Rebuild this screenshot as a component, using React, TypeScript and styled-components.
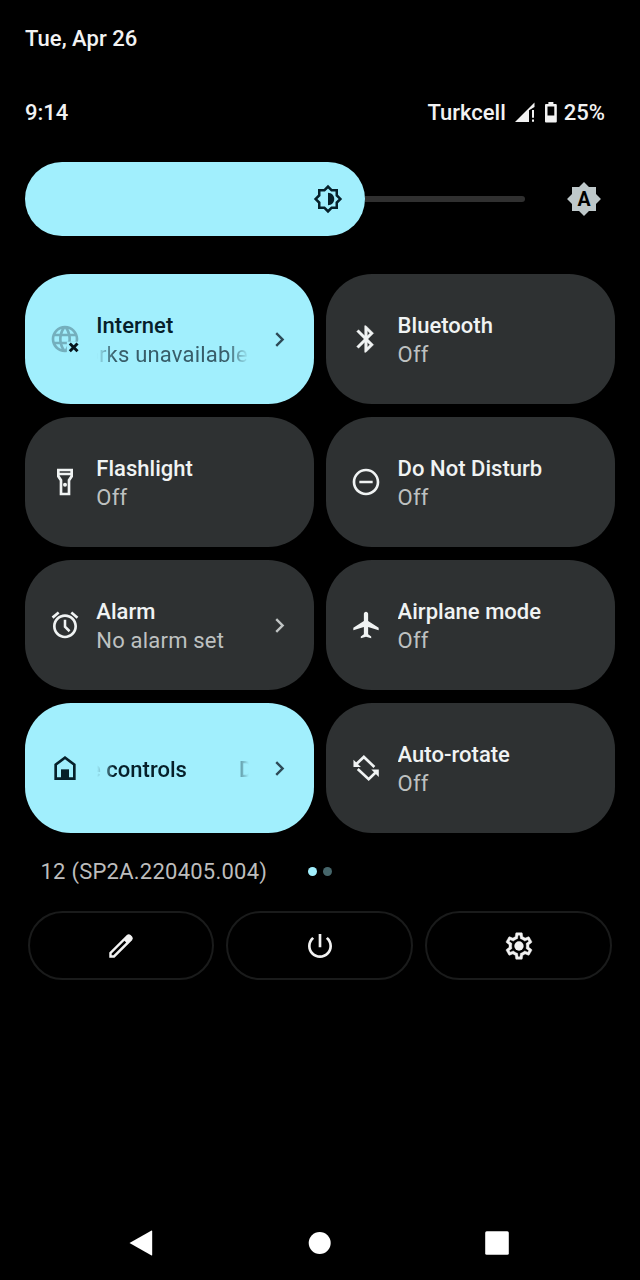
import React from "react";
import styled, { createGlobalStyle, css } from "styled-components";

const ACCENT = "#a1effd";
const TILE = "#2e3132";

const GlobalStyle = createGlobalStyle`
  *, *::before, *::after { box-sizing: border-box; }
  body { margin: 0; background: #000; }
`;

const Screen = styled.main`
  display: flex;
  flex-direction: column;
  width: 640px;
  height: 1280px;
  padding: 25px 25px 0;
  overflow: hidden;
  background: #000;
  color: #f2f2f2;
  font-family: Roboto, "Noto Sans", sans-serif;
  font-size: 22px;
  font-weight: 500;
  line-height: 28px;
`;

const DateLine = styled.div`
  height: 28px;
  letter-spacing: 0.04px;
`;

const StatusBar = styled.div`
  display: flex;
  justify-content: space-between;
  height: 28px;
  margin-top: 46px;
  padding-right: 10px;
`;

const StatusIcons = styled.div`
  display: flex;
  align-items: center;
`;

const SignalIcon = styled.svg`
  width: 20px;
  height: 20px;
  margin: 0 10px 2px 9px;
`;

const BatteryIcon = styled.svg`
  width: 12px;
  height: 21px;
  margin: 0 7px 2px 0;
`;

const BrightnessRow = styled.div`
  display: flex;
  align-items: center;
  height: 74px;
  margin-top: 35px;
`;

const SliderFill = styled.div`
  display: flex;
  align-items: center;
  justify-content: flex-end;
  width: 340px;
  height: 74px;
  padding-right: 22px;
  border-radius: 37px;
  background: ${ACCENT};
  color: #06202a;
`;

const SliderTrack = styled.div`
  width: 160px;
  height: 6px;
  border-radius: 0 3px 3px 0;
  background: #303030;
`;

const AutoBrightness = styled.div`
  display: flex;
  margin-left: 41px;
  color: #bec8ca;
`;

const Glyph = styled.svg<{ $size: number }>`
  display: block;
  flex: none;
  width: ${(p) => p.$size}px;
  height: ${(p) => p.$size}px;
  fill: currentColor;
`;

const BadgeLetter = styled.text`
  font: 700 13px Roboto, sans-serif;
  fill: #000;
  text-anchor: middle;
`;

const TileGrid = styled.div`
  display: grid;
  grid-template-columns: 1fr 1fr;
  grid-auto-rows: 130.4px;
  gap: 12.6px;
  margin-top: 38px;
`;

const TileCard = styled.div<{ $active?: boolean }>`
  display: flex;
  align-items: center;
  min-width: 0;
  padding: 0 20px 0 24px;
  border-radius: 46px;
  background: ${(p) => (p.$active ? ACCENT : TILE)};
  color: ${(p) => (p.$active ? "#06202a" : "#f0f3f3")};
`;

const TileText = styled.div`
  flex: 1;
  min-width: 0;
  margin-left: 15.3px;
  padding-top: 2px;
`;

const fade = css`
  mask-image: linear-gradient(to right, transparent 1px, #000 18px, #000 calc(100% - 22px), transparent);
`;

const TileTitle = styled.div<{ $shift?: number }>`
  overflow: hidden;
  line-height: 29px;
  letter-spacing: 0.03px;
  white-space: nowrap;
  text-indent: ${(p) => p.$shift ?? 0}px;
  ${(p) => p.$shift && fade}
`;

const TileState = styled.div<{ $active?: boolean; $shift?: number }>`
  overflow: hidden;
  color: ${(p) => (p.$active ? "#385d69" : "#bec1c1")};
  font-weight: 400;
  line-height: 30px;
  letter-spacing: 0.2px;
  white-space: nowrap;
  text-indent: ${(p) => p.$shift ?? 0}px;
  ${(p) => p.$shift && fade}
`;

const MarqueeCopy = styled.span`
  margin-left: 52px;
`;

const Chevron = styled.span<{ $active?: boolean }>`
  margin-left: 16px;
  color: ${(p) => (p.$active ? "#2d4a57" : "#c0c4c4")};
`;

const FooterInfo = styled.div`
  display: flex;
  align-items: center;
  height: 28px;
  margin-top: 24px;
  padding-left: 15.5px;
`;

const BuildNumber = styled.div`
  width: 267.5px;
  padding-top: 2px;
  color: #bdbdbd;
  font-weight: 400;
  letter-spacing: 0.24px;
`;

const PageDot = styled.i<{ $current?: boolean }>`
  width: 9px;
  height: 9px;
  margin-right: 6px;
  border-radius: 50%;
  background: ${(p) => (p.$current ? ACCENT : "#46666b")};
`;

const Actions = styled.div`
  display: grid;
  grid-template-columns: repeat(3, 1fr);
  gap: 12px;
  margin: 26px 3px 0 2.5px;
`;

const ActionButton = styled.button`
  display: flex;
  align-items: center;
  justify-content: center;
  height: 69px;
  padding: 0;
  border: 2px solid #1a1b1b;
  border-radius: 35px;
  background: transparent;
  color: #f2f2f2;
`;

const NavBar = styled.nav`
  display: flex;
  align-items: center;
  justify-content: space-between;
  height: 75px;
  margin: auto 106px 0 104px;
`;

const NavIcon = styled.svg`
  width: 24px;
  height: 26px;
  fill: #fff;
`;

const STAR =
  "M20 8.69V4h-4.69L12 .69 8.69 4H4v4.69L.69 12 4 15.31V20h4.69L12 23.31 15.31 20H20v-4.69L23.31 12z";

const icons: Record<string, React.ReactNode> = {
  internet: (
    <>
      <path
        fill="#74afbd"
        d="M11.99 2C6.47 2 2 6.48 2 12s4.47 10 9.99 10C17.52 22 22 17.52 22 12S17.52 2 11.99 2zm6.93 6h-2.95c-.32-1.25-.78-2.45-1.38-3.56 1.84.63 3.37 1.91 4.33 3.56zM12 4.04c.83 1.2 1.48 2.53 1.91 3.96h-3.82c.43-1.43 1.08-2.76 1.91-3.96zM4.26 14C4.1 13.36 4 12.69 4 12s.1-1.36.26-2h3.38c-.08.66-.14 1.32-.14 2s.06 1.34.14 2H4.26zm.82 2h2.95c.32 1.25.78 2.45 1.38 3.56-1.84-.63-3.37-1.9-4.33-3.56zm2.95-8H5.08c.96-1.66 2.49-2.93 4.33-3.56C8.81 5.55 8.35 6.75 8.03 8zM12 19.96c-.83-1.2-1.48-2.53-1.91-3.96h3.82c-.43 1.43-1.08 2.76-1.91 3.96zM14.34 14H9.66c-.09-.66-.16-1.32-.16-2s.07-1.35.16-2h4.68c.09.65.16 1.32.16 2s-.07 1.34-.16 2zm.25 5.56c.6-1.11 1.06-2.31 1.38-3.56h2.95c-.96 1.65-2.49 2.93-4.33 3.56zM16.36 14c.08-.66.14-1.32.14-2s-.06-1.34-.14-2h3.38c.16.64.26 1.31.26 2s-.1 1.36-.26 2h-3.38z"
      />
      <path fill={ACCENT} d="M13.4 14h10.4V24H13.4z" />
      <path d="M15.6 15.4l5.8 5.8m0-5.8l-5.8 5.8" stroke="#06141c" strokeWidth="2.2" />
    </>
  ),
  bluetooth: (
    <path d="M17.71 7.71L12 2h-1v7.59L6.41 5 5 6.41 10.59 12 5 17.59 6.41 19 11 14.41V22h1l5.71-5.71-4.3-4.29 4.3-4.29zM13 5.83l1.88 1.88L13 9.59V5.83zm1.88 10.46L13 18.17v-3.76l1.88 1.88z" stroke="currentColor" strokeWidth="0.3" />
  ),
  flashlight: (
    <>
      <path
        fillRule="evenodd"
        d="M18 2H6v6l2 3v11h8V11l2-3V2zM16 4v1H8V4h8zM14 10.4V20h-4v-9.6L8 7.4V7h8v.4l-2 3z"
      />
      <circle cx="12" cy="14" r="1.5" />
    </>
  ),
  dnd: (
    <path d="M7 11v2h10v-2H7zm5-9C6.48 2 2 6.48 2 12s4.48 10 10 10 10-4.48 10-10S17.52 2 12 2zm0 18c-4.41 0-8-3.59-8-8s3.59-8 8-8 8 3.59 8 8-3.59 8-8 8z" />
  ),
  alarm: (
    <>
      <path d="M22 5.72l-4.6-3.86-1.29 1.53 4.6 3.86L22 5.72zM7.88 3.39L6.6 1.86 2 5.71l1.29 1.53 4.59-3.85zM12 4c-4.97 0-9 4.03-9 9s4.02 9 9 9c4.97 0 9-4.03 9-9s-4.03-9-9-9zm0 16c-3.87 0-7-3.13-7-7s3.13-7 7-7 7 3.13 7 7-3.13 7-7 7z" />
      <path d="M12 8v5.3l3.4 3.4" fill="none" stroke="currentColor" strokeWidth="1.9" />
    </>
  ),
  airplane: (
    <path d="M21.5 16v-1.9L13.6 9V3.6c0-.88-.72-1.6-1.6-1.6s-1.6.72-1.6 1.6V9l-7.9 5.1V16l7.9-2.5V19l-2.3 1.6V22l3.9-1.1 3.9 1.1v-1.4L13.6 19v-5.5z" />
  ),
  home: (
    <>
      <path fillRule="evenodd" d="M4 21V9l8-6 8 6v12zM6 19h12v-9l-6-4.5L6 10z" />
      <path d="M9 13h6v7H9z" />
    </>
  ),
  rotate: (
    <>
      <path
        d="M4.6 9.2L10.4 3.7l7.9 7.6M5.8 12.8l8.2 7.6 5.6-5.4"
        fill="none"
        stroke="currentColor"
        strokeWidth="2"
      />
      <path d="M2.6 5.8v5.4h5.6zM21.6 18.7v-5.5H16z" />
    </>
  ),
  chevron: <path d="M8.59 16.59L13.17 12 8.59 7.41 10 6l6 6-6 6z" />,
  edit: (
    <path
      fillRule="evenodd"
      d="M3.2 20.8v-3.9L16.4 3.7q1.4-1.2 2.8 0l1.1 1.1q1.2 1.4 0 2.8L7.1 20.8zM5 17.7V19h1.3l9.6-9.6-1.3-1.3z"
    />
  ),
  power: (
    <path d="M13 3h-2v10h2V3zm4.83 2.17l-1.42 1.42C17.99 7.86 19 9.81 19 12c0 3.87-3.13 7-7 7s-7-3.13-7-7c0-2.19 1.01-4.14 2.58-5.42L6.17 5.17C4.23 6.82 3 9.26 3 12c0 4.97 4.03 9 9 9s9-4.03 9-9c0-2.74-1.23-5.18-3.17-6.83z" />
  ),
  settings: (
    <>
      <path stroke="currentColor" strokeWidth="0.3" d="M19.43 12.98c.04-.32.07-.64.07-.98 0-.34-.03-.66-.07-.98l2.11-1.65c.19-.15.24-.42.12-.64l-2-3.46c-.09-.16-.26-.25-.44-.25-.06 0-.12.01-.17.03l-2.49 1c-.52-.4-1.08-.73-1.69-.98l-.38-2.65C14.46 2.18 14.25 2 14 2h-4c-.25 0-.46.18-.49.42l-.38 2.65c-.61.25-1.17.59-1.69.98l-2.49-1c-.06-.02-.12-.03-.18-.03-.17 0-.34.09-.43.25l-2 3.46c-.13.22-.07.49.12.64l2.11 1.65c-.04.32-.07.65-.07.98 0 .33.03.66.07.98l-2.11 1.65c-.19.15-.24.42-.12.64l2 3.46c.09.16.26.25.44.25.06 0 .12-.01.17-.03l2.49-1c.52.4 1.08.73 1.69.98l.38 2.65c.03.24.24.42.49.42h4c.25 0 .46-.18.49-.42l.38-2.65c.61-.25 1.17-.59 1.69-.98l2.49 1c.06.02.12.03.18.03.17 0 .34-.09.43-.25l2-3.46c.12-.22.07-.49-.12-.64l-2.11-1.65zm-1.98-1.71c.04.31.05.52.05.73 0 .21-.02.43-.05.73l-.14 1.13.89.7 1.08.84-.7 1.21-1.27-.51-1.04-.42-.9.68c-.43.32-.84.56-1.25.73l-1.06.43-.16 1.13-.2 1.35h-1.4l-.19-1.35-.16-1.13-1.06-.43c-.43-.18-.83-.41-1.23-.71l-.91-.7-1.06.43-1.27.51-.7-1.21 1.08-.84.89-.7-.14-1.13c-.03-.31-.05-.54-.05-.74s.02-.43.05-.73l.14-1.13-.89-.7-1.08-.84.7-1.21 1.27.51 1.04.42.9-.68c.43-.32.84-.56 1.25-.73l1.06-.43.16-1.13.2-1.35h1.39l.19 1.35.16 1.13 1.06.43c.43.18.83.41 1.23.71l.91.7 1.06-.43 1.27-.51.7 1.21-1.07.85-.89.7.14 1.13z" />
      <circle cx="12" cy="12" r="3.5" />
    </>
  ),
  brightness: (
    <>
      <path
        fillRule="evenodd"
        d={STAR + "M18 14.48V18h-3.52L12 20.48 9.52 18H6v-3.52L3.52 12 6 9.52V6h3.52L12 3.52 14.48 6H18v3.52L20.48 12z"}
      />
      <path d="M12 7v10c2.76 0 5-2.24 5-5s-2.24-5-5-5z" />
    </>
  ),
  auto: (
    <>
      <path d={STAR} />
      <BadgeLetter x="12" y="16.4">A</BadgeLetter>
    </>
  ),
};

const Icon = ({ name, size = 32 }: { name: string; size?: number }) => (
  <Glyph $size={size} viewBox="0 0 24 24" aria-hidden="true">
    {icons[name]}
  </Glyph>
);

interface TileData {
  icon: string;
  title: string;
  state?: string;
  active?: boolean;
  more?: boolean;
  titleShift?: number;
  stateShift?: number;
}

const tiles: TileData[] = [
  { icon: "internet", title: "Internet", state: "Networks unavailable", active: true, more: true, stateShift: -62 },
  { icon: "bluetooth", title: "Bluetooth", state: "Off" },
  { icon: "flashlight", title: "Flashlight", state: "Off" },
  { icon: "dnd", title: "Do Not Disturb", state: "Off" },
  { icon: "alarm", title: "Alarm", state: "No alarm set", more: true },
  { icon: "airplane", title: "Airplane mode", state: "Off" },
  { icon: "home", title: "Device controls", active: true, more: true, titleShift: -61.5 },
  { icon: "rotate", title: "Auto-rotate", state: "Off" },
];

const Tile = ({ icon, title, state, active, more, titleShift, stateShift }: TileData) => (
  <TileCard $active={active}>
    <Icon name={icon} />
    <TileText>
      <TileTitle $shift={titleShift}>
        {title}
        {titleShift && <MarqueeCopy>{title}</MarqueeCopy>}
      </TileTitle>
      {state && (
        <TileState $active={active} $shift={stateShift}>
          {state}
        </TileState>
      )}
    </TileText>
    {more && (
      <Chevron $active={active}>
        <Icon name="chevron" size={29} />
      </Chevron>
    )}
  </TileCard>
);

export default function App() {
  return (
    <>
      <GlobalStyle />
      <Screen>
        <DateLine>Tue, Apr 26</DateLine>
        <StatusBar>
          <span>9:14</span>
          <StatusIcons>
            <span>Turkcell</span>
            <SignalIcon viewBox="0 0 20 20" fill="#f2f2f2">
              <path d="M0 20L19.5.5V5L14 8.2V20zM17 8h2v7.7h-2zM17 17.5h2v2.3h-2z" />
            </SignalIcon>
            <BatteryIcon viewBox="0 0 12 21" fill="#f2f2f2">
              <path fillRule="evenodd" d="M3.4 0h5v2h2.4q1 0 1 1v16.6q0 1-1 1H1q-1 0-1-1V3q0-1 1-1h2.4zM2.5 4.6v9h6.8v-9z" />
            </BatteryIcon>
            <span>25%</span>
          </StatusIcons>
        </StatusBar>
        <BrightnessRow>
          <SliderFill>
            <Icon name="brightness" size={30} />
          </SliderFill>
          <SliderTrack />
          <AutoBrightness>
            <Icon name="auto" size={36} />
          </AutoBrightness>
        </BrightnessRow>
        <TileGrid>
          {tiles.map((tile) => (
            <Tile key={tile.title} {...tile} />
          ))}
        </TileGrid>
        <FooterInfo>
          <BuildNumber>12 (SP2A.220405.004)</BuildNumber>
          <PageDot $current />
          <PageDot />
        </FooterInfo>
        <Actions>
          {["edit", "power", "settings"].map((name) => (
            <ActionButton key={name} aria-label={name}>
              <Icon name={name} />
            </ActionButton>
          ))}
        </Actions>
        <NavBar>
          <NavIcon viewBox="0 0 24 26">
            <path d="M.5 13L22.6.6q.6-.3.6.4v24q0 .7-.6.4z" />
          </NavIcon>
          <NavIcon viewBox="0 0 24 26">
            <circle cx="12.7" cy="13" r="11" />
          </NavIcon>
          <NavIcon viewBox="0 0 24 26">
            <rect x="0.2" y="1.2" width="23.6" height="23.6" rx="1.5" />
          </NavIcon>
        </NavBar>
      </Screen>
    </>
  );
}
